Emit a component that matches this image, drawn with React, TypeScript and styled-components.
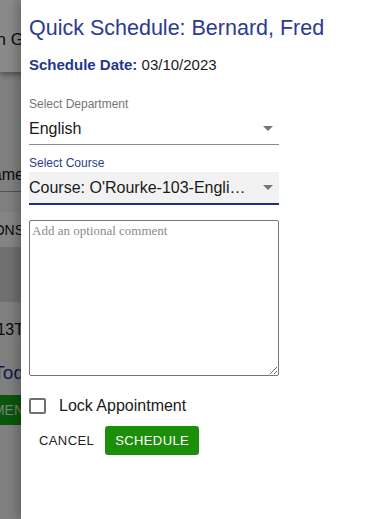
import React from "react";
import styled, { createGlobalStyle } from "styled-components";

const GlobalStyle = createGlobalStyle`
  html, body {
    margin: 0;
    padding: 0;
    background: #ececec;
  }
  body {
    font-family: "Liberation Sans", Arial, sans-serif;
  }
`;

const Screen = styled.div`
  position: relative;
  width: 365px;
  height: 519px;
  overflow: hidden;
  background: #ececec;
`;

/* page behind the drawer, only a sliver of it shows */
const Page = styled.div`
  width: 24px;
  display: flex;
  flex-direction: column;
`;

const PageHeader = styled.div`
  height: 72px;
  background: #fff;
  box-shadow: 0 2px 6px rgba(0, 0, 0, 0.45);
  display: flex;
  justify-content: flex-end;
  align-items: center;
  padding-top: 8px;
  box-sizing: border-box;
  overflow: hidden;
  white-space: nowrap;
  font-size: 17px;
  color: #111;
`;

const PageRow = styled.div<{
  $h: number;
  $bg?: string;
  $color?: string;
  $size?: number;
  $line?: boolean;
  $bottom?: boolean;
}>`
  height: ${(p) => p.$h}px;
  background: ${(p) => p.$bg || "transparent"};
  color: ${(p) => p.$color || "#111"};
  font-size: ${(p) => p.$size || 16}px;
  display: flex;
  justify-content: flex-end;
  align-items: ${(p) => (p.$bottom ? "flex-end" : "center")};
  padding-bottom: ${(p) => (p.$bottom ? 7 : 0)}px;
  overflow: hidden;
  white-space: nowrap;
  box-sizing: border-box;
  border-bottom: ${(p) => (p.$line ? "1px solid #9a9a9a" : "none")};
`;

const Dim = styled.div`
  position: absolute;
  inset: 0;
  background: rgba(0, 0, 0, 0.46);
`;

const Drawer = styled.aside`
  position: absolute;
  top: 0;
  bottom: 0;
  left: 21px;
  right: 0;
  background: #fff;
  box-shadow: -4px 0 10px rgba(0, 0, 0, 0.25);
  padding: 16px 8px 0;
  box-sizing: border-box;
  display: flex;
  flex-direction: column;
  align-items: flex-start;
`;

const Title = styled.h2`
  margin: 0;
  font-size: 21.5px;
  line-height: 24px;
  font-weight: 400;
  color: #2b3b8e;
  white-space: nowrap;
`;

const DateLine = styled.div`
  margin-top: 16px;
  font-size: 15px;
  line-height: 18px;
  color: #1a1a1a;
  b {
    color: #26368a;
    font-weight: 700;
  }
`;

const Field = styled.div<{ $top: number }>`
  margin-top: ${(p) => p.$top}px;
  width: 250px;
  display: flex;
  flex-direction: column;
`;

const FieldLabel = styled.label<{ $focused?: boolean }>`
  font-size: 12px;
  line-height: 14px;
  color: ${(p) => (p.$focused ? "#2b3b8e" : "#757575")};
  margin-bottom: 2px;
`;

const SelectBox = styled.div<{ $focused?: boolean }>`
  height: 31px;
  display: flex;
  align-items: center;
  background: ${(p) => (p.$focused ? "#f2f2f2" : "transparent")};
  border-bottom: ${(p) => (p.$focused ? "2px solid #1f2f86" : "1px solid #8c8c8c")};
  font-size: 16px;
  color: #1a1a1a;
`;

const SelectValue = styled.span`
  flex: 1;
  min-width: 0;
  overflow: hidden;
  text-overflow: ellipsis;
  white-space: nowrap;
  padding-right: 12px;
`;

const Caret = styled.span`
  width: 0;
  height: 0;
  margin-right: 6px;
  border-left: 5px solid transparent;
  border-right: 5px solid transparent;
  border-top: 5px solid #757575;
`;

const Comment = styled.textarea`
  margin-top: 15px;
  width: 250px;
  height: 156px;
  box-sizing: border-box;
  border: 1px solid #767676;
  border-radius: 2px;
  padding: 2px;
  font-family: "Liberation Serif", "Times New Roman", serif;
  font-size: 13px;
  line-height: 15px;
  &::placeholder {
    color: #8a8a8a;
  }
`;

const CheckRow = styled.label`
  margin-top: 20px;
  display: flex;
  align-items: center;
  gap: 13px;
  font-size: 16px;
  line-height: 19px;
  color: #1a1a1a;
`;

const CheckBox = styled.span`
  width: 17px;
  height: 16px;
  box-sizing: border-box;
  border: 2px solid #6f6f6f;
  border-radius: 2px;
`;

const Actions = styled.div`
  margin-top: 11px;
  display: flex;
  gap: 1px;
`;

const Button = styled.button<{ $primary?: boolean }>`
  height: 29px;
  padding: 0 10px;
  border: none;
  border-radius: 3px;
  font-family: "Liberation Sans", Arial, sans-serif;
  font-size: 13px;
  letter-spacing: 0.4px;
  text-transform: uppercase;
  background: ${(p) => (p.$primary ? "#1c8f0a" : "transparent")};
  color: ${(p) => (p.$primary ? "#fff" : "#222")};
  cursor: pointer;
`;

export default function App() {
  return (
    <Screen>
      <GlobalStyle />
      <Page>
        <PageHeader>Plan G</PageHeader>
        <PageRow $h={120} $line $bottom>
          Name
        </PageRow>
        <PageRow $h={20} />
        <PageRow $h={35} $bg="#f6f6f6" $size={14}>
          BUTTONS
        </PageRow>
        <PageRow $h={55} $bg="#cfcfcf" />
        <PageRow $h={18} />
        <PageRow $h={20}>2013T</PageRow>
        <PageRow $h={20}>:</PageRow>
        <PageRow $h={26} $color="#1b2f8a" $size={19}>
          Tod
        </PageRow>
        <PageRow $h={9} />
        <PageRow $h={30} $bg="#15a015" $color="#dfe8df" $size={14}>
          COMMEN
        </PageRow>
      </Page>
      <Dim />
      <Drawer>
        <Title>Quick Schedule: Bernard, Fred</Title>
        <DateLine>
          <b>Schedule Date:</b> 03/10/2023
        </DateLine>
        <Field $top={23}>
          <FieldLabel>Select Department</FieldLabel>
          <SelectBox>
            <SelectValue>English</SelectValue>
            <Caret />
          </SelectBox>
        </Field>
        <Field $top={11}>
          <FieldLabel $focused>Select Course</FieldLabel>
          <SelectBox $focused>
            <SelectValue>Course: O'Rourke-103-English 10</SelectValue>
            <Caret />
          </SelectBox>
        </Field>
        <Comment placeholder="Add an optional comment" />
        <CheckRow>
          <CheckBox />
          Lock Appointment
        </CheckRow>
        <Actions>
          <Button>Cancel</Button>
          <Button $primary>Schedule</Button>
        </Actions>
      </Drawer>
    </Screen>
  );
}
